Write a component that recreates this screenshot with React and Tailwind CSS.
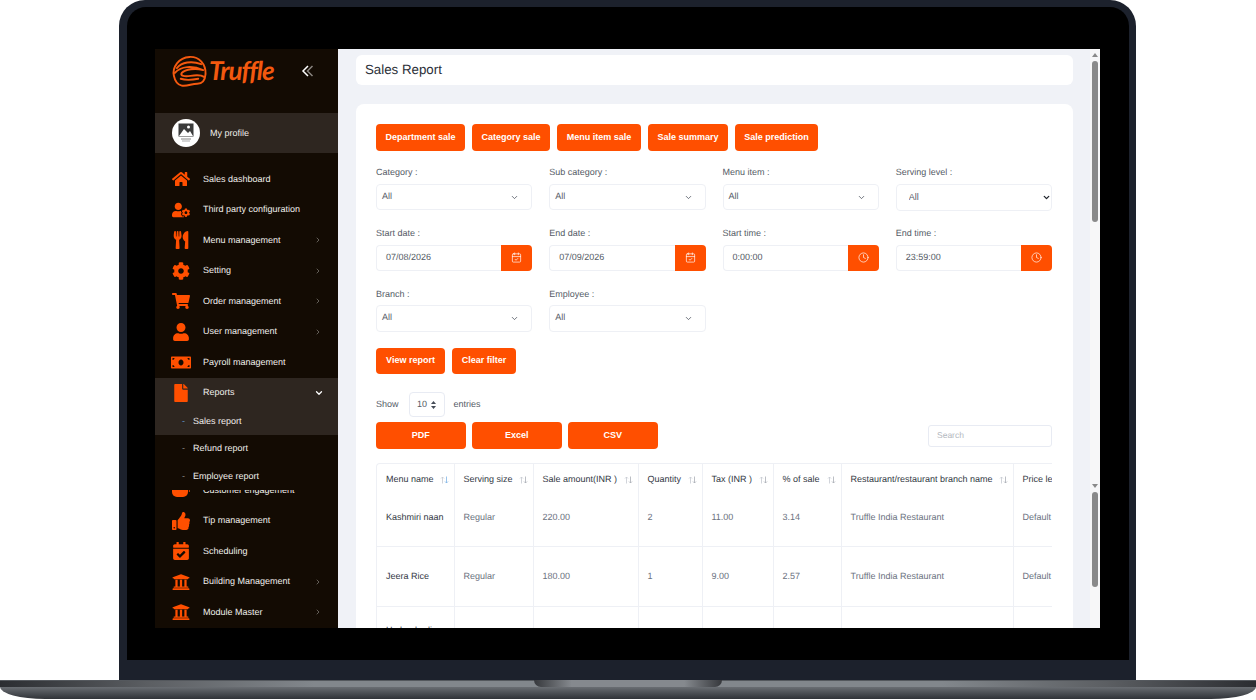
import { CalendarCheck, ChevronDown, ChevronRight, Clock } from 'lucide-react';
import {
  FaCalendarCheck,
  FaCog,
  FaFile,
  FaHome,
  FaMoneyBill,
  FaShoppingCart,
  FaThumbsUp,
  FaUniversity,
  FaUser,
  FaUserCog,
  FaUtensils,
} from 'react-icons/fa';

function EngagementIcon({ size, color }) {
  return (
    <svg width={size} height={size} viewBox="0 0 18 18" fill={color}>
      <rect x="0" y="2" width="16" height="14" rx="5" />
      <circle cx="17.500" cy="10" r="0.800" />
    </svg>
  );
}

const menuTop = [
  { label: 'Sales dashboard', icon: FaHome },
  { label: 'Third party configuration', icon: FaUserCog },
  { label: 'Menu management', icon: FaUtensils, arrow: true },
  { label: 'Setting', icon: FaCog, arrow: true },
  { label: 'Order management', icon: FaShoppingCart, arrow: true },
  { label: 'User management', icon: FaUser, arrow: true },
  { label: 'Payroll management', icon: FaMoneyBill, iconSize: 21 },
];

const menuBottom = [
  { label: 'Tip management', icon: FaThumbsUp },
  { label: 'Scheduling', icon: FaCalendarCheck },
  { label: 'Building Management', icon: FaUniversity, arrow: true },
  { label: 'Module Master', icon: FaUniversity, arrow: true },
];

const columns = [
  { label: 'Menu name', width: 'w-[77px]', active: true },
  { label: 'Serving size', width: 'w-[79px]' },
  { label: 'Sale amount(INR )', width: 'w-[105px]' },
  { label: 'Quantity', width: 'w-[64px]' },
  { label: 'Tax (INR )', width: 'w-[71px]' },
  { label: '% of sale', width: 'w-[68px]' },
  { label: 'Restaurant/restaurant branch name', width: 'w-[172px]' },
  { label: 'Price level', width: 'w-[100px]', noSort: true },
];

const rows = [
  { id: 1, height: 'h-[57px]', cells: ['Kashmiri naan', 'Regular', '220.00', '2', '11.00', '3.14', 'Truffle India Restaurant', 'Default'] },
  { id: 2, height: 'h-[60px]', cells: ['Jeera Rice', 'Regular', '180.00', '1', '9.00', '2.57', 'Truffle India Restaurant', 'Default'] },
  { id: 3, height: 'h-[60px]', cells: ['Hyderabadi Biryani', '', '', '', '', '', '', ''] },
];

function TruffleMark() {
  return (
    <svg width="36" height="33" viewBox="0 0 37 33" fill="none" stroke="#f4590f" strokeWidth="2" strokeLinecap="round" strokeLinejoin="round">
      <path d="M3 21C1 12 8 2 19 1.500C29 1 36 9 35.500 19C35 26 32 29 27 29C21 29 17 32 11 31C7 30 4 26 3 21Z" />
      <path d="M6 13C11 7 21 5 31 9" />
      <path d="M4 18C10 11 22 10 33 15C25 13 15 14 11 18C9 21 14 22 20 21C26 20 31 20 34 22" />
      <path d="M10 24C16 26 23 25 28 24" />
    </svg>
  );
}

function ProfileImage() {
  return (
    <svg width="16" height="20" viewBox="0 0 16 20">
      <rect x="0.500" y="0.500" width="15" height="13" fill="#3b3b3b" />
      <circle cx="10.500" cy="4" r="1.500" fill="#fff" />
      <path d="M1 13L6 6L10 10L12 8L15 13Z" fill="#fff" />
      <rect x="3" y="15.500" width="10" height="1" fill="#888" />
      <rect x="4" y="17.500" width="8" height="1" fill="#aaa" />
    </svg>
  );
}

function CollapseIcon() {
  return (
    <svg width="13" height="12" viewBox="0 0 13 12" fill="none" strokeWidth="1.500">
      <path d="M11.500 1L6.500 6L11.500 11" stroke="#8a8580" />
      <path d="M7 1L2 6L7 11" stroke="#ffffff" />
    </svg>
  );
}

function SortArrows({ active }) {
  return (
    <svg width="9" height="8" viewBox="0 0 9 8" fill="none" strokeWidth="0.800" className="shrink-0">
      <path d="M2.500 7.500V1M1 2.500L2.500 1L4 2.500" stroke="#c5c9d1" />
      <path d="M6.500 0.500V7M5 5.500L6.500 7L8 5.500" stroke={active ? '#7fb4e6' : '#a9adb5'} />
    </svg>
  );
}

function MenuItem({ item }) {
  const Icon = item.icon;
  return (
    <div className="flex items-center h-[30.500px] pl-[16px] pr-[16px] text-[9px] text-[#f1efec]">
      <span className="w-[20px] flex justify-center shrink-0">
        <Icon size={item.iconSize || 18} color="#ff4f00" />
      </span>
      <span className="ml-[12px] flex-1 whitespace-nowrap">{item.label}</span>
      {item.arrow && <ChevronRight size={8} color="#8d8984" strokeWidth={2} />}
    </div>
  );
}

function Sidebar() {
  return (
    <aside className="w-[183px] shrink-0 bg-[#130b03] overflow-hidden">
      <div className="h-[64px] flex items-start pt-[6px] pl-[16px]">
        <TruffleMark />
        <span className="w-[68px] ml-[2px] -mt-[2px] text-[26px] leading-[34px] font-bold italic font-['Lato',sans-serif] tracking-[-1px] text-[#f4590f]">
          Truffle
        </span>
        <span className="ml-[24px] mt-[10px]">
          <CollapseIcon />
        </span>
      </div>
      <div className="h-[40px] bg-[#2e2620] flex items-center pl-[17px] text-[9px] text-[#f1efec]">
        <span className="w-[28px] h-[28px] rounded-full bg-white flex items-center justify-center">
          <ProfileImage />
        </span>
        <span className="ml-[10px] mt-[1px]">My profile</span>
      </div>
      <div className="mt-[11px]">
        {menuTop.map((item) => (
          <MenuItem key={item.label} item={item} />
        ))}
      </div>
      <div className="relative z-10 bg-[#130b03]">
        <div className="bg-[#2e2620] h-[57.500px]">
          <div className="flex items-center h-[30.500px] pl-[16px] pr-[14px] text-[9px] text-[#f1efec]">
            <span className="w-[20px] flex justify-center shrink-0">
              <FaFile size={18} color="#ff4f00" />
            </span>
            <span className="ml-[12px] flex-1">Reports</span>
            <ChevronDown size={10} color="#ffffff" strokeWidth={3} />
          </div>
          <div className="flex items-center h-[27.500px] pl-[27px] text-[9px] text-[#f1efec]">
            <span className="w-[11px] text-[#5f93c4]">-</span>
            Sales report
          </div>
        </div>
        <div className="flex items-center h-[27.500px] pl-[27px] text-[9px] text-[#f1efec]">
          <span className="w-[11px] text-[#8d8984]">-</span>
          Refund report
        </div>
        <div className="flex items-center h-[27.500px] pl-[27px] text-[9px] text-[#f1efec]">
          <span className="w-[11px] text-[#8d8984]">-</span>
          Employee report
        </div>
      </div>
      <div className="-mt-[15px]">
        <MenuItem item={{ label: 'Customer engagement', icon: EngagementIcon }} />
        {menuBottom.map((item) => (
          <MenuItem key={item.label} item={item} />
        ))}
      </div>
    </aside>
  );
}

function OrangeButton({ children, className }) {
  return (
    <button className={`rounded-[4px] bg-[#ff4f00] text-white text-[9px] font-bold ${className}`}>
      {children}
    </button>
  );
}

function FieldLabel({ children }) {
  return <div className="h-[12px] text-[9px] leading-[12px] text-[#555b66] whitespace-nowrap">{children}</div>;
}

function SelectField({ label }) {
  return (
    <div>
      <FieldLabel>{label}</FieldLabel>
      <div className="mt-[5.500px] h-[26.500px] rounded-[4px] border border-[#eef0f5] bg-white flex items-center justify-between pl-[5px] pr-[12px] text-[9px] text-[#555b66]">
        <span className="-mt-[1px]">All</span>
        <ChevronDown size={9} color="#444b57" strokeWidth={2} className="mt-[1px]" />
      </div>
    </div>
  );
}

function PickerField({ label, value, icon: Icon }) {
  return (
    <div>
      <FieldLabel>{label}</FieldLabel>
      <div className="mt-[5.500px] h-[26.500px] flex">
        <div className="flex-1 rounded-l-[4px] border border-r-0 border-[#eef0f5] bg-white flex items-center pl-[9px] text-[9px] text-[#555b66]">
          {value}
        </div>
        <div className="w-[31px] rounded-r-[4px] bg-[#ff4f00] flex items-center justify-center">
          <Icon size={11} color="#ffffff" strokeWidth={1.500} />
        </div>
      </div>
    </div>
  );
}

function ReportForm() {
  return (
    <div className="grid grid-cols-4 gap-x-[17px] mt-[15px]">
      <SelectField label="Category :" />
      <SelectField label="Sub category :" />
      <SelectField label="Menu item :" />
      <div>
        <FieldLabel>Serving level :</FieldLabel>
        <div className="relative mt-[5.500px]">
          <select className="w-full h-[26.500px] appearance-none rounded-[4px] border border-[#eef0f5] bg-white pl-[12px] text-[9px] text-[#555b66]">
            <option>All</option>
          </select>
          <ChevronDown size={9} color="#20242c" strokeWidth={3.500} className="absolute right-[1px] top-[9px]" />
        </div>
      </div>

      <div className="col-span-4 h-[16.500px]" />
      <PickerField label="Start date :" value="07/08/2026" icon={CalendarCheck} />
      <PickerField label="End date :" value="07/09/2026" icon={CalendarCheck} />
      <PickerField label="Start time :" value="0:00:00" icon={Clock} />
      <PickerField label="End time :" value="23:59:00" icon={Clock} />

      <div className="col-span-4 h-[16.500px]" />
      <SelectField label="Branch :" />
      <SelectField label="Employee :" />
    </div>
  );
}

function SalesTable() {
  return (
    <div className="mt-[14px] w-[676px] overflow-hidden rounded-tl-[4px] border-t border-l border-[#eef0f5]">
      <table className="table-fixed w-[736px] border-collapse text-[9px]">
        <thead>
          <tr className="h-[25px]">
            {columns.map((col) => (
              <th key={col.label} className={`${col.width} border-r border-[#eef0f5] pl-[9px] pr-[5px] pt-[10px] align-top text-left font-normal text-[#333844]`}>
                <div className="flex items-center justify-between whitespace-nowrap leading-[11px]">
                  {col.label}
                  {!col.noSort && <SortArrows active={col.active} />}
                </div>
              </th>
            ))}
          </tr>
        </thead>
        <tbody>
          {rows.map((row) => (
            <tr key={row.id} className={`${row.height} border-b border-[#eef0f5]`}>
              {row.cells.map((cell, i) => (
                <td key={i} className={`border-r border-[#eef0f5] pl-[9px] pr-[5px] leading-[12px] ${i === 0 ? 'text-[#333844]' : 'text-[#6b7280]'}`}>
                  {cell}
                </td>
              ))}
            </tr>
          ))}
        </tbody>
      </table>
    </div>
  );
}

function Scrollbar() {
  return (
    <div className="w-[10px] shrink-0 bg-[#f7f7f8] flex flex-col items-center">
      <div className="mt-[4px] w-0 h-0 border-x-[3px] border-b-[4px] border-x-transparent border-b-[#8a8a8a]" />
      <div className="mt-[4px] w-[6px] h-[161px] rounded-[3px] bg-[#8a8a8a]" />
      <div className="mt-[262px] w-0 h-0 border-x-[3px] border-t-[4px] border-x-transparent border-t-[#8a8a8a]" />
      <div className="mt-[4px] w-[6px] h-[95px] rounded-[3px] bg-[#8a8a8a]" />
    </div>
  );
}

function MainPanel() {
  return (
    <main className="flex-1 bg-[#f0f2f7] pr-[17px] pl-[18px] pt-[6px] overflow-hidden">
      <div className="h-[30px] rounded-[6px] bg-white flex items-center pl-[9px] text-[13.300px] text-[#2b2f38]">
        Sales Report
      </div>
      <div className="mt-[19px] h-[600px] rounded-[8px] bg-white pl-[20px] pr-[21px] pt-[20px] overflow-hidden">
        <div className="flex gap-[7px]">
          <OrangeButton className="h-[27px] w-[89px]">Department sale</OrangeButton>
          <OrangeButton className="h-[27px] w-[78px]">Category sale</OrangeButton>
          <OrangeButton className="h-[27px] w-[84px]">Menu item sale</OrangeButton>
          <OrangeButton className="h-[27px] w-[80px]">Sale summary</OrangeButton>
          <OrangeButton className="h-[27px] w-[83px]">Sale prediction</OrangeButton>
        </div>
        <ReportForm />
        <div className="flex gap-[7px] mt-[16px]">
          <OrangeButton className="h-[26.500px] w-[69px]">View report</OrangeButton>
          <OrangeButton className="h-[26.500px] w-[64px]">Clear filter</OrangeButton>
        </div>
        <div className="mt-[18px] flex items-center text-[9px] text-[#555b66]">
          <span className="mt-[1px]">Show</span>
          <div className="ml-[10px] w-[36px] h-[25px] rounded-[4px] border border-[#e8ebf3] flex items-center justify-center gap-[4px]">
            <span className="mt-[1px]">10</span>
            <svg width="5" height="8" viewBox="0 0 5 8" fill="#444b57">
              <path d="M2.500 0L5 3H0Z" />
              <path d="M2.500 8L0 5H5Z" />
            </svg>
          </div>
          <span className="ml-[9px] mt-[1px]">entries</span>
        </div>
        <div className="mt-[5px] flex items-center gap-[6.500px]">
          <OrangeButton className="h-[27px] w-[89.500px]">PDF</OrangeButton>
          <OrangeButton className="h-[27px] w-[89.500px]">Excel</OrangeButton>
          <OrangeButton className="h-[27px] w-[89.500px]">CSV</OrangeButton>
          <div className="ml-auto w-[124px] h-[22px] rounded-[3px] border border-[#e8ebf3] flex items-center pl-[8px] text-[8.500px] text-[#b4b8c0]">
            Search
          </div>
        </div>
        <SalesTable />
      </div>
    </main>
  );
}

function LaptopBase() {
  return (
    <div className="w-[1256px] h-[20px] relative">
      <div className="h-[7px] bg-[linear-gradient(90deg,#2b2d31,#5c5f63_12%,#82878c_25%,#82878c_75%,#5c5f63_88%,#2b2d31)] border-t border-[#54585d]" />
      <div className="h-[12px] rounded-bl-[45px_12px] rounded-br-[45px_12px] bg-gradient-to-b from-[#6a6e73] to-[#303338]" />
      <div className="absolute left-[534px] top-0 w-[188px] h-[7px] rounded-b-[8px] bg-[linear-gradient(90deg,#36383c,#85898e_20%,#85898e_80%,#36383c)]" />
    </div>
  );
}

export default function App() {
  return (
    <div className="w-[1256px] h-[700px] bg-white overflow-hidden flex flex-col font-['Liberation_Sans',Arial,sans-serif] [text-rendering:geometricPrecision]">
      <div className="ml-[119px] w-[1017px] h-[680px] shrink-0 rounded-t-[26px] bg-[#1c212c] pl-[8px] pr-[7px] pt-[7px]">
        <div className="h-[653px] rounded-t-[19px] bg-black pl-[28px] pt-[42px]">
          <div className="w-[945px] h-[579px] flex overflow-hidden">
            <Sidebar />
            <MainPanel />
            <Scrollbar />
          </div>
        </div>
      </div>
      <LaptopBase />
    </div>
  );
}
